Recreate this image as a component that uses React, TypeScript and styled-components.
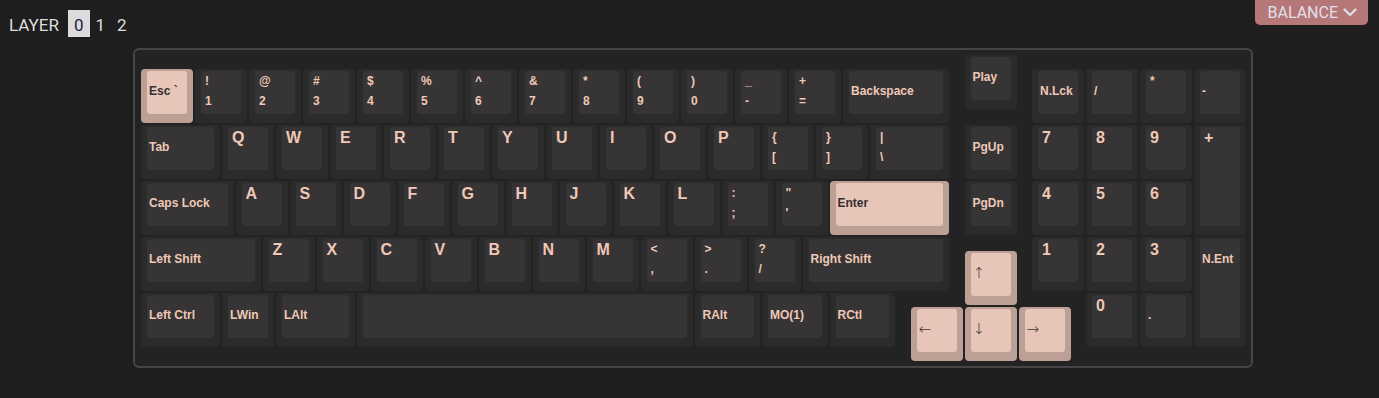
import React from "react";
import styled, { createGlobalStyle } from "styled-components";

const GlobalStyle = createGlobalStyle`
  html, body {
    margin: 0;
    padding: 0;
    background: #1e1e1e;
  }
  body {
    font-family: "Liberation Sans", Arial, sans-serif;
  }
`;

type Kind = "mod" | "big" | "dual" | "arrow";

type KeyDef = {
  x: number;
  y: number;
  w?: number;
  h?: number;
  kind: Kind;
  label?: string;
  top?: string;
  bottom?: string;
  hl?: boolean;
};

const mod = (x: number, y: number, label: string, w = 1, h = 1, hl = false): KeyDef => ({
  x, y, w, h, kind: "mod", label, hl,
});
const big = (x: number, y: number, label: string, h = 1): KeyDef => ({ x, y, h, kind: "big", label });
const dual = (x: number, y: number, top: string, bottom: string, w = 1): KeyDef => ({
  x, y, w, kind: "dual", top, bottom,
});
const arrow = (x: number, y: number, label: string): KeyDef => ({ x, y, kind: "arrow", label, hl: true });

const numberRow: [string, string][] = [
  ["!", "1"], ["@", "2"], ["#", "3"], ["$", "4"], ["%", "5"], ["^", "6"],
  ["&", "7"], ["*", "8"], ["(", "9"], [")", "0"], ["_", "-"], ["+", "="],
];

const KEYS: KeyDef[] = [
  // row 0
  mod(0, 0, "Esc `", 1, 1, true),
  ...numberRow.map(([t, b], i) => dual(1 + i, 0, t, b)),
  mod(13, 0, "Backspace", 2),
  mod(15.25, -0.25, "Play"),
  mod(16.5, 0, "N.Lck"),
  mod(17.5, 0, "/"),
  dual(18.5, 0, "*", ""),
  mod(19.5, 0, "-"),
  // row 1
  mod(0, 1, "Tab", 1.5),
  ..."QWERTYUIOP".split("").map((c, i) => big(1.5 + i, 1, c)),
  dual(11.5, 1, "{", "["),
  dual(12.5, 1, "}", "]"),
  dual(13.5, 1, "|", "\\", 1.5),
  mod(15.25, 1, "PgUp"),
  big(16.5, 1, "7"),
  big(17.5, 1, "8"),
  big(18.5, 1, "9"),
  big(19.5, 1, "+", 2),
  // row 2
  mod(0, 2, "Caps Lock", 1.75),
  ..."ASDFGHJKL".split("").map((c, i) => big(1.75 + i, 2, c)),
  dual(10.75, 2, ":", ";"),
  dual(11.75, 2, "\"", "'"),
  mod(12.75, 2, "Enter", 2.25, 1, true),
  mod(15.25, 2, "PgDn"),
  big(16.5, 2, "4"),
  big(17.5, 2, "5"),
  big(18.5, 2, "6"),
  // row 3
  mod(0, 3, "Left Shift", 2.25),
  ..."ZXCVBNM".split("").map((c, i) => big(2.25 + i, 3, c)),
  dual(9.25, 3, "<", ","),
  dual(10.25, 3, ">", "."),
  dual(11.25, 3, "?", "/"),
  mod(12.25, 3, "Right Shift", 2.75),
  arrow(15.25, 3.25, "↑"),
  big(16.5, 3, "1"),
  big(17.5, 3, "2"),
  big(18.5, 3, "3"),
  mod(19.5, 3, "N.Ent", 1, 2),
  // row 4
  mod(0, 4, "Left Ctrl", 1.5),
  mod(1.5, 4, "LWin"),
  mod(2.5, 4, "LAlt", 1.5),
  mod(4, 4, "", 6.25),
  mod(10.25, 4, "RAlt", 1.25),
  mod(11.5, 4, "MO(1)", 1.25),
  mod(12.75, 4, "RCtl", 1.25),
  arrow(14.25, 4.25, "←"),
  arrow(15.25, 4.25, "↓"),
  arrow(16.25, 4.25, "→"),
  big(17.5, 4, "0"),
  mod(18.5, 4, "."),
];

/* ---------- header ---------- */

const Page = styled.div`
  display: flex;
  flex-direction: column;
  min-height: 398px;
`;

const Header = styled.header`
  display: flex;
  justify-content: space-between;
  align-items: flex-start;
  height: 48px;
`;

const LayerPicker = styled.div`
  display: flex;
  align-items: baseline;
  margin: 10px 0 0 9px;
  font-family: Roboto, "Liberation Sans", sans-serif;
  font-size: 17px;
  color: #dedede;
`;

const LayerTitle = styled.span`
  padding-top: 3px;
  line-height: 24px;
  margin-right: 9px;
`;

const LayerButton = styled.span<{ $active?: boolean }>`
  padding: 3px 6px 0;
  line-height: 24px;
  background: ${(p) => (p.$active ? "#dcdcdc" : "transparent")};
  color: ${(p) => (p.$active ? "#1c2240" : "#dedede")};
  cursor: pointer;
`;

const BalanceButton = styled.button`
  display: flex;
  align-items: center;
  gap: 5px;
  height: 25px;
  box-sizing: border-box;
  margin: 0 11px 0 0;
  padding: 0 11px 0 12px;
  border: none;
  border-radius: 0 0 5px 5px;
  background: #b57777;
  color: #e2e0ec;
  font-family: Roboto, "Liberation Sans", sans-serif;
  font-size: 16px;
  line-height: 25px;
`;

const Chevron = () => (
  <svg width="14" height="9" viewBox="0 0 14 9" fill="none">
    <polyline
      points="1.5,1.5 7,7 12.5,1.5"
      stroke="#e2e0ec"
      strokeWidth="2.2"
      strokeLinecap="round"
      strokeLinejoin="round"
    />
  </svg>
);

/* ---------- keyboard ---------- */

const KeyboardFrame = styled.div`
  align-self: flex-start;
  margin-left: 133px;
  padding: 5px 3px 3px 6px;
  border: 2px solid #454545;
  border-radius: 6px;
  background: #232323;
`;

const KeyGrid = styled.div`
  display: grid;
  grid-template-columns: repeat(82, 13.5px);
  grid-template-rows: repeat(22, 14px);
`;

const KeyShell = styled.div<{ $hl?: boolean }>`
  display: flex;
  margin: 0 2px 2px 0;
  padding: 2px 6px 9px 6px;
  border-radius: 4px;
  background: ${(p) => (p.$hl ? "#bc9f95" : "#2b2b2b")};
  min-width: 0;
  min-height: 0;
`;

const KeyCap = styled.div<{ $hl?: boolean }>`
  flex: 1;
  display: flex;
  flex-direction: column;
  border-radius: 3px;
  background: ${(p) => (p.$hl ? "#e8c5b9" : "#363434")};
  color: ${(p) => (p.$hl ? "#333030" : "#efc8b7")};
  font-weight: bold;
  overflow: hidden;
  white-space: nowrap;
`;

const ModLegend = styled.span`
  padding: 13px 2px 0;
  font-size: 12px;
  line-height: 14px;
`;

const ArrowLegend = styled.span`
  padding: 13px 2px 0;
  font-family: "DejaVu Sans", sans-serif;
  font-size: 15px;
  line-height: 14px;
  font-weight: 200;
  color: #3c3535;
`;

const BigLegend = styled.span`
  padding: 2px 4px 0;
  font-size: 16px;
  line-height: 18px;
`;

const DualLegend = styled.span`
  display: flex;
  flex-direction: column;
  padding: 0 4px;
  font-size: 12px;
  line-height: 20px;
`;

const LegendLine = styled.span`
  height: 20px;
`;

const Key = ({ k }: { k: KeyDef }) => {
  const w = k.w ?? 1;
  const h = k.h ?? 1;
  const style = {
    gridColumn: `${Math.round(k.x * 4) + 1} / span ${Math.round(w * 4)}`,
    gridRow: `${Math.round((k.y + 0.25) * 4) + 1} / span ${Math.round(h * 4)}`,
  };
  let legend: React.ReactNode = null;
  if (k.kind === "mod") legend = <ModLegend>{k.label}</ModLegend>;
  else if (k.kind === "arrow") legend = <ArrowLegend>{k.label}</ArrowLegend>;
  else if (k.kind === "big") legend = <BigLegend>{k.label}</BigLegend>;
  else
    legend = (
      <DualLegend>
        <LegendLine>{k.top}</LegendLine>
        <LegendLine>{k.bottom}</LegendLine>
      </DualLegend>
    );
  return (
    <KeyShell $hl={k.hl} style={style}>
      <KeyCap $hl={k.hl}>{legend}</KeyCap>
    </KeyShell>
  );
};

export default function App() {
  return (
    <Page>
      <GlobalStyle />
      <Header>
        <LayerPicker>
          <LayerTitle>LAYER</LayerTitle>
          <LayerButton $active>0</LayerButton>
          <LayerButton>1</LayerButton>
          <LayerButton>2</LayerButton>
        </LayerPicker>
        <BalanceButton>
          BALANCE
          <Chevron />
        </BalanceButton>
      </Header>
      <KeyboardFrame>
        <KeyGrid>
          {KEYS.map((k, i) => (
            <Key key={i} k={k} />
          ))}
        </KeyGrid>
      </KeyboardFrame>
    </Page>
  );
}
